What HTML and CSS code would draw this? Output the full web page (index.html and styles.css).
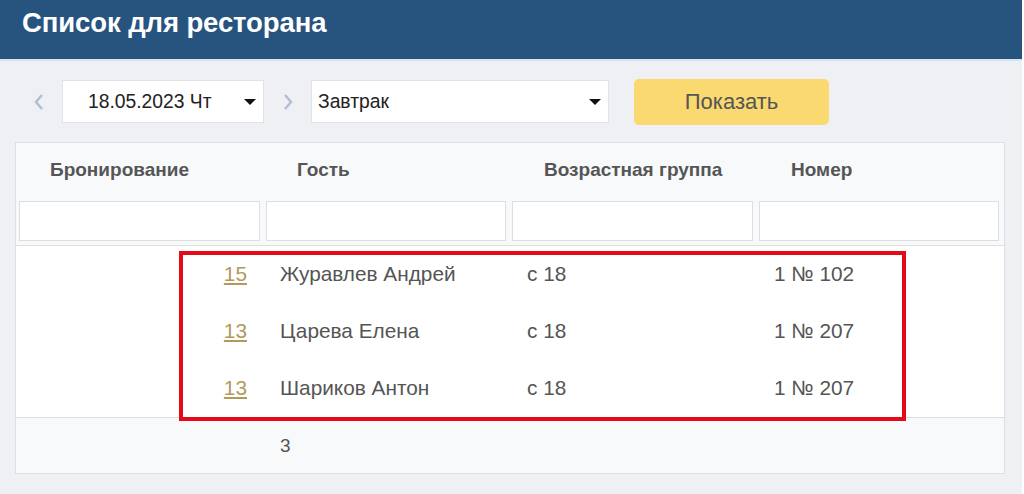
FILE: index.html
```html
<!DOCTYPE html>
<html lang="ru">
<head>
  <meta charset="UTF-8" />
  <title>Список для ресторана</title>
  <link rel="stylesheet" href="styles.css">
</head>
<body>
  <div class="page">
    <header class="top-bar">
      <h1>Список для ресторана</h1>
    </header>

    <div class="toolbar">
      <span class="arrow">
        <svg width="14" height="20" viewBox="0 0 14 20"><polyline points="10,3 4,10 10,17" /></svg>
      </span>
      <div class="select date-select">
        <span>18.05.2023 Чт</span>
        <span class="caret"></span>
      </div>
      <span class="arrow">
        <svg width="14" height="20" viewBox="0 0 14 20"><polyline points="4,3 10,10 4,17" /></svg>
      </span>
      <div class="select meal-select">
        <span>Завтрак</span>
        <span class="caret"></span>
      </div>
      <button class="show-btn">Показать</button>
    </div>

    <div class="panel">
      <div class="row head">
        <div class="cell">Бронирование</div>
        <div class="cell">Гость</div>
        <div class="cell">Возрастная группа</div>
        <div class="cell">Номер</div>
      </div>
      <div class="row filters">
        <div class="filter"></div>
        <div class="filter"></div>
        <div class="filter"></div>
        <div class="filter"></div>
      </div>
      <div class="body">
        <div class="row item">
          <div class="cell num"><a href="#">15</a></div>
          <div class="cell">Журавлев Андрей</div>
          <div class="cell">с 18</div>
          <div class="cell">1 № 102</div>
        </div>
        <div class="row item">
          <div class="cell num"><a href="#">13</a></div>
          <div class="cell">Царева Елена</div>
          <div class="cell">с 18</div>
          <div class="cell">1 № 207</div>
        </div>
        <div class="row item">
          <div class="cell num"><a href="#">13</a></div>
          <div class="cell">Шариков Антон</div>
          <div class="cell">с 18</div>
          <div class="cell">1 № 207</div>
        </div>
        <div class="highlight"></div>
      </div>
      <div class="row total">
        <div class="cell"></div>
        <div class="cell">3</div>
        <div class="cell"></div>
        <div class="cell"></div>
      </div>
    </div>
  </div>
</body>
</html>
```

FILE: styles.css
```css
* {
  box-sizing: border-box;
}

html {
  background: #fff;
}

body {
  margin: 0;
  font-family: "Liberation Sans", Arial, sans-serif;
  color: #555;
}

.page {
  width: 1022px;
  height: 494px;
  background: #eef0f4;
}

.top-bar {
  height: 61px;
  background: #26547f;
  border-bottom: 2px solid #d4e6f3;
  padding: 7px 0 0 22px;
}

.top-bar h1 {
  margin: 0;
  color: #fff;
  font-size: 27.5px;
  font-weight: bold;
  letter-spacing: -0.1px;
}

.toolbar {
  display: flex;
  align-items: center;
  height: 81px;
  padding-left: 32px;
}

.arrow {
  width: 30px;
  display: flex;
}

.arrow svg polyline {
  fill: none;
  stroke: #b2bcd2;
  stroke-width: 2.4;
}

.select {
  height: 43px;
  background: #fff;
  border: 1px solid #e0e2e6;
  display: flex;
  align-items: center;
  justify-content: space-between;
  font-size: 19.3px;
  color: #222;
}

.date-select {
  width: 202px;
  padding: 0 7px 0 25px;
  margin-right: 17px;
}

.meal-select {
  width: 298px;
  padding: 0 7px 0 6px;
  margin-right: 25px;
}

.caret {
  width: 0;
  height: 0;
  border-left: 6px solid transparent;
  border-right: 6px solid transparent;
  border-top: 6px solid #111;
}

.show-btn {
  width: 195px;
  height: 46px;
  border: 0;
  border-radius: 5px;
  background: #f9d970;
  color: #555;
  font-family: inherit;
  font-size: 22px;
}

.panel {
  width: 990px;
  margin-left: 15px;
  border: 1px solid #dcdee2;
  background: #f8f9fb;
}

.row {
  display: grid;
  grid-template-columns: repeat(4, 1fr);
}

.head {
  height: 54px;
  align-items: center;
}

.head .cell {
  padding-left: 34px;
  font-size: 19px;
  font-weight: bold;
  color: #555;
}

.filters {
  height: 49px;
  padding: 4px 5px 0 3px;
  gap: 6px;
  border-bottom: 1px solid #dcdee2;
}

.filter {
  height: 40px;
  background: #fff;
  border: 1px solid #dcdee2;
}

.body {
  position: relative;
  background: #fff;
  border-bottom: 1px solid #dcdee2;
}

.item {
  height: 57px;
  align-items: center;
  font-size: 20.8px;
}

.item:last-of-type {
  height: 58px;
}

.item .cell {
  padding-left: 17px;
  padding-bottom: 2px;
}

.item .num {
  text-align: right;
  padding-right: 16px;
}

.num a {
  color: #b09a5c;
  text-decoration: underline;
}

.highlight {
  position: absolute;
  left: 163px;
  top: 5px;
  width: 727px;
  height: 170px;
  border: 4px solid #e30b17;
}

.total {
  height: 55px;
  align-items: center;
  font-size: 19px;
}

.total .cell {
  padding-left: 17px;
}
```
